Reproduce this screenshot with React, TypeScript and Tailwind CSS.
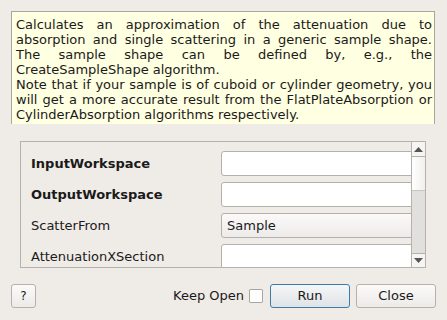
import React from "react";

const rows = [
  { label: "InputWorkspace", bold: true, value: "", combo: false },
  { label: "OutputWorkspace", bold: true, value: "", combo: false },
  { label: "ScatterFrom", bold: false, value: "Sample", combo: true },
  { label: "AttenuationXSection", bold: false, value: "", combo: false },
];

const App: React.FC = () => {
  return (
    <div
      className="w-[447px] h-[320px] bg-[#efebe7] text-[#1a1a1a] flex flex-col overflow-hidden"
      style={{ fontFamily: '"DejaVu Sans", sans-serif' }}
    >
      {/* Description */}
      <div className="ml-[11px] mt-[11px] w-[424px] h-[113px] bg-[#ffffe1] border-t border-l border-r border-[#a9a6a2] pl-[4px] pr-[2px] pt-[5px]">
        <p className="text-[13px] leading-[15px] text-justify">
          Calculates an approximation of the attenuation due to absorption and single scattering in a generic sample
          shape. The sample shape can be defined by, e.g., the CreateSampleShape algorithm.
        </p>
        <p className="text-[13px] leading-[15px] text-justify">
          Note that if your sample is of cuboid or cylinder geometry, you will get a more accurate result from the
          FlatPlateAbsorption or CylinderAbsorption algorithms respectively.
        </p>
      </div>

      {/* Properties */}
      <div className="ml-[20px] mt-[17px] w-[406px] h-[127px] border border-[#b5b2ad] flex">
        <div className="flex-1 overflow-hidden pt-[9px] pl-[10px] flex flex-col gap-[6px]">
          {rows.map((r) => (
            <div key={r.label} className="flex items-center h-[25px] shrink-0">
              <span className={`w-[190px] shrink-0 text-[13px] ${r.bold ? "font-bold" : ""}`}>{r.label}</span>
              <div
                className={`w-[220px] shrink-0 h-[25px] rounded-[3px] border border-[#b4b1ad] text-[13px] flex items-center pl-[5px] ${
                  r.combo ? "bg-gradient-to-b from-[#fbfaf9] to-[#ecebe9]" : "bg-white"
                }`}
              >
                {r.value}
              </div>
            </div>
          ))}
        </div>
        {/* Scrollbar */}
        <div className="w-[14px] border-l border-[#b5b2ad] flex flex-col bg-[#e2e0dd]">
          <div className="h-[15px] border-b border-[#b5b2ad] bg-[#f6f5f3] flex items-center justify-center">
            <svg width="9" height="5" viewBox="0 0 9 5">
              <path d="M0 5 L4.5 0 L9 5 Z" fill="#555" />
            </svg>
          </div>
          <div className="h-[34px] bg-gradient-to-r from-[#ffffff] to-[#f1f0ee] border-b border-[#c9c6c2]" />
          <div className="flex-1" />
          <div className="h-[14px] border-t border-[#b5b2ad] bg-[#f6f5f3] flex items-center justify-center">
            <svg width="9" height="5" viewBox="0 0 9 5">
              <path d="M0 0 L4.5 5 L9 0 Z" fill="#555" />
            </svg>
          </div>
        </div>
      </div>

      {/* Buttons */}
      <div className="mt-[16px] px-[11px] flex items-center h-[24px]">
        <button className="w-[25px] h-[24px] rounded-[3px] border border-[#b5b2ad] bg-gradient-to-b from-[#fbfaf9] to-[#edebe8] text-[12px]">
          ?
        </button>
        <div className="flex-1" />
        <span className="text-[13px] mr-[5px]">Keep Open</span>
        <div className="w-[14px] h-[14px] border border-[#a9a6a2] bg-white rounded-[1px] mr-[7px]" />
        <button className="w-[80px] h-[24px] rounded-[3px] border border-[#3f7ba8] bg-gradient-to-b from-[#f5f6f7] to-[#dfe3e6] text-[13px]">
          Run
        </button>
        <button className="ml-[6px] w-[80px] h-[24px] rounded-[3px] border border-[#b5b2ad] bg-gradient-to-b from-[#fbfaf9] to-[#edebe8] text-[13px]">
          Close
        </button>
      </div>
    </div>
  );
};

export default App;
